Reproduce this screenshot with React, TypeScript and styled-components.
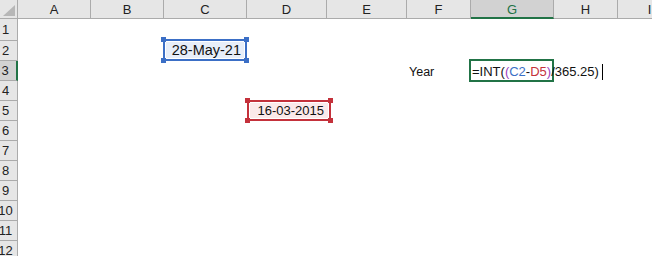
import styled, { createGlobalStyle } from "styled-components";

const GlobalStyle = createGlobalStyle`
  html, body {
    margin: 0;
    padding: 0;
    background: #ffffff;
    overflow: hidden;
  }
  body {
    font-family: "Liberation Sans", Arial, sans-serif;
  }
`;

const COLUMNS = ["A", "B", "C", "D", "E", "F", "G", "H", "I"];
const ROW_COUNT = 12;
const GREEN = "#217346";
const BLUE = "#3b6fc6";
const RED = "#c4313b";
const PURPLE = "#9b3fbf";

const Sheet = styled.div`
  display: grid;
  grid-template-columns: 18px 73px 73px 83px 80px 80px 64px 83px 64px 64px;
  grid-template-rows: 19px 22px repeat(11, 20px);
  width: 652px;
  height: 256px;
  overflow: hidden;
`;

const Corner = styled.div`
  position: relative;
  background: #e6e6e6;
  border-right: 1px solid #ababab;
  border-bottom: 1px solid #ababab;
  box-sizing: border-box;

  &::after {
    content: "";
    position: absolute;
    right: 2px;
    bottom: 2px;
    width: 0;
    height: 0;
    border-left: 12px solid transparent;
    border-bottom: 11px solid #b7b7b7;
  }
`;

const ColHeader = styled.div<{ $active?: boolean }>`
  display: flex;
  align-items: center;
  justify-content: center;
  background: ${(p) => (p.$active ? "#d2d2d2" : "#e6e6e6")};
  color: ${(p) => (p.$active ? GREEN : "#222")};
  border-right: 1px solid #ababab;
  border-bottom: ${(p) => (p.$active ? `2px solid ${GREEN}` : "1px solid #ababab")};
  box-sizing: border-box;
  font-size: 13px;
  padding-top: 1px;
  white-space: nowrap;
  overflow: hidden;
`;

const RowHeader = styled.div<{ $active?: boolean }>`
  display: flex;
  align-items: center;
  justify-content: center;
  padding-right: 6px;
  background: ${(p) => (p.$active ? "#d2d2d2" : "#e6e6e6")};
  color: #222;
  border-right: ${(p) => (p.$active ? `2px solid ${GREEN}` : "1px solid #ababab")};
  border-bottom: 1px solid #ababab;
  box-sizing: border-box;
  font-size: 13px;
  white-space: nowrap;
`;

const Cell = styled.div<{ $align?: "left" | "right" }>`
  position: relative;
  display: flex;
  align-items: flex-end;
  justify-content: ${(p) => (p.$align === "right" ? "flex-end" : "flex-start")};
  background: transparent;
  color: #111;
  font-size: 13px;
  white-space: nowrap;
  line-height: 1;
`;

const CellText = styled.span<{ $size?: number; $padLeft?: number; $padRight?: number; $padBottom?: number }>`
  position: relative;
  z-index: 2;
  font-size: ${(p) => p.$size ?? 13}px;
  padding-left: ${(p) => p.$padLeft ?? 0}px;
  padding-right: ${(p) => p.$padRight ?? 0}px;
  padding-bottom: ${(p) => p.$padBottom ?? 3}px;
  display: flex;
  align-items: flex-end;
`;

const RangeBox = styled.div<{ $color: string; $fill?: string }>`
  position: absolute;
  z-index: 1;
  border: 2px solid ${(p) => p.$color};
  box-sizing: border-box;
  background: ${(p) => (p.$fill ? "#fff" : "transparent")};

  &::before {
    content: "";
    position: absolute;
    inset: 1px;
    background: ${(p) => p.$fill ?? "transparent"};
  }
`;

const Handle = styled.span<{ $color: string; $pos: "tl" | "tr" | "bl" | "br" }>`
  position: absolute;
  width: 5px;
  height: 5px;
  background: ${(p) => p.$color};
  ${(p) => (p.$pos[0] === "t" ? "top: -4px;" : "bottom: -4px;")}
  ${(p) => (p.$pos[1] === "l" ? "left: -4px;" : "right: -4px;")}
`;

const Ref = styled.span<{ $color: string }>`
  color: ${(p) => p.$color};
`;

const Caret = styled.span`
  display: inline-block;
  width: 1px;
  height: 16px;
  margin-left: 3px;
  margin-bottom: -2px;
  background: #000;
`;

function Corners({ color }: { color: string }) {
  return (
    <>
      <Handle $color={color} $pos="tl" />
      <Handle $color={color} $pos="tr" />
      <Handle $color={color} $pos="bl" />
      <Handle $color={color} $pos="br" />
    </>
  );
}

function renderCell(row: number, col: string) {
  const key = `${col}${row}`;
  switch (key) {
    case "C2":
      return (
        <Cell key={key} $align="right">
          <RangeBox $color={BLUE} $fill="#e7eef9" style={{ inset: "-2px 0 0 -1px" }}>
            <Corners color={BLUE} />
          </RangeBox>
          <CellText $size={14.5} $padRight={6} $padBottom={4}>
            28-May-21
          </CellText>
        </Cell>
      );
    case "D5":
      return (
        <Cell key={key} $align="right">
          <RangeBox $color={RED} $fill="#fbe9ea" style={{ inset: "-1px -4px 0 0" }}>
            <Corners color={RED} />
          </RangeBox>
          <CellText $padRight={3} $padBottom={4}>
            16-03-2015
          </CellText>
        </Cell>
      );
    case "F3":
      return (
        <Cell key={key}>
          <CellText $size={12.5} $padLeft={2} $padBottom={3}>
            Year
          </CellText>
        </Cell>
      );
    case "G3":
      return (
        <Cell key={key}>
          <RangeBox $color={GREEN} style={{ inset: "-2px 0 -1px -2px" }} />
          <CellText $padLeft={1} $padBottom={3}>
            =INT(<Ref $color={PURPLE}>(</Ref>
            <Ref $color={BLUE}>C2</Ref>-<Ref $color={RED}>D5</Ref>
            <Ref $color={PURPLE}>)</Ref>/365.25)
            <Caret />
          </CellText>
        </Cell>
      );
    default:
      return <Cell key={key} />;
  }
}

export default function App() {
  const rows = Array.from({ length: ROW_COUNT }, (_, i) => i + 1);

  return (
    <>
      <GlobalStyle />
      <Sheet>
        <Corner />
        {COLUMNS.map((c) => (
          <ColHeader key={c} $active={c === "G"}>
            {c}
          </ColHeader>
        ))}
        {rows.map((r) => [
          <RowHeader key={`h${r}`} $active={r === 3}>
            {r}
          </RowHeader>,
          ...COLUMNS.map((c) => renderCell(r, c)),
        ])}
      </Sheet>
    </>
  );
}
